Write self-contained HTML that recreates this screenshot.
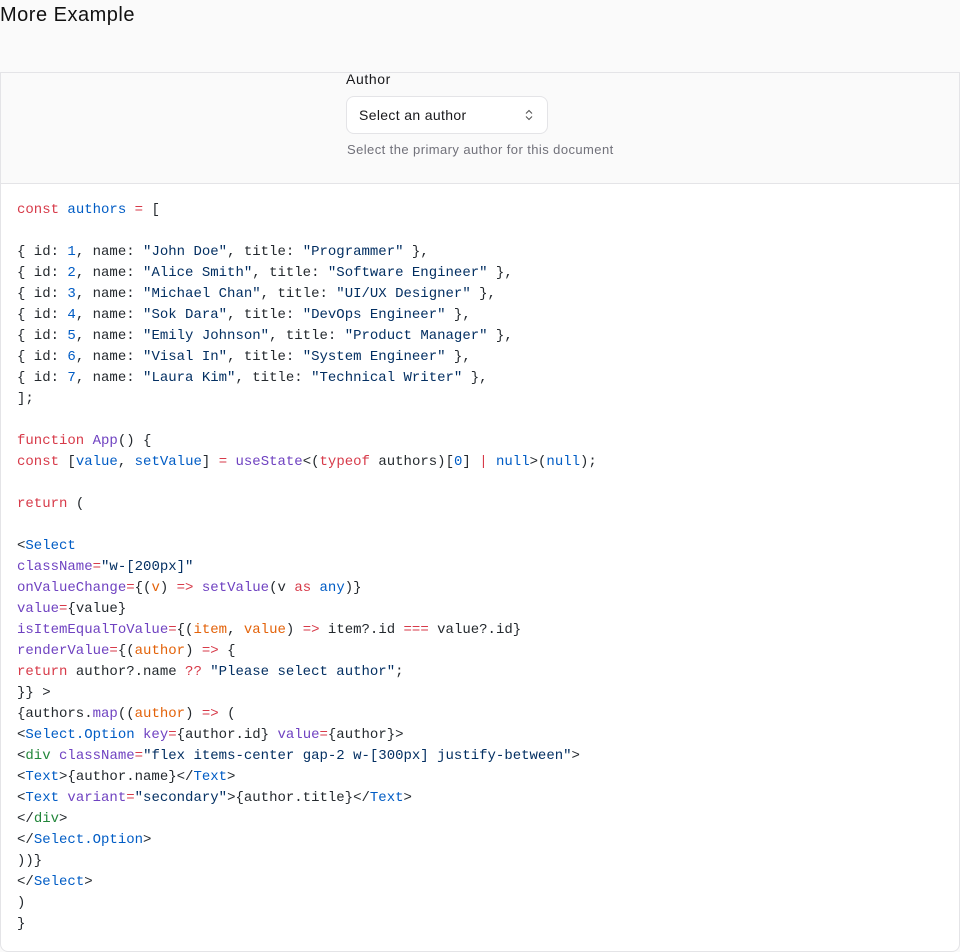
<!DOCTYPE html>
<html><head><meta charset="utf-8"><style>
*{box-sizing:border-box;margin:0;padding:0}
body{width:960px;height:952px;background:#fafafa;font-family:"Liberation Sans",sans-serif;overflow:hidden;position:relative}
h2{position:absolute;left:0;top:4px;font-size:20px;font-weight:400;color:#111;letter-spacing:0.5px}
.card{position:absolute;left:0;top:72px;width:960px;height:880px;border:1px solid #e4e4e7;border-radius:0 0 8px 8px;overflow:hidden;background:#fff}
.top{height:111px;background:#fafafa;border-bottom:1px solid #e4e4e7;position:relative}
.lbl{position:absolute;left:345px;top:-2px;font-size:14px;color:#18181b;letter-spacing:0.6px}
.sel{position:absolute;left:345px;top:23px;width:202px;height:38px;border:1px solid #e4e4e7;border-radius:8px;background:#fff;font-size:14px;color:#18181b;padding:10px 12px;letter-spacing:0.35px}
.sel svg{position:absolute;right:14px;top:12px}
.hint{position:absolute;left:346px;top:69px;font-size:13px;color:#71717a;letter-spacing:0.42px}
pre{font-family:"Liberation Mono",monospace;font-size:14px;line-height:21px;color:#24292e;padding:16px 16px}
.k{color:#d73a49}.b{color:#005cc5}.s{color:#032f62}.p{color:#6f42c1}.o{color:#e36209}.g{color:#22863a}
</style></head><body>
<h2>More Example</h2>
<div class="card">
<div class="top">
<div class="lbl">Author</div>
<div class="sel">Select an author<svg width="8" height="12" viewBox="0 0 8 12"><path d="M1 4.5L4 1.5L7 4.5M1 7.5L4 10.5L7 7.5" fill="none" stroke="#555" stroke-width="1.1"/></svg></div>
<div class="hint">Select the primary author for this document</div>
</div>
<pre><span class="k">const</span> <span class="b">authors</span> <span class="k">=</span> [

{ id: <span class="b">1</span>, name: <span class="s">"John Doe"</span>, title: <span class="s">"Programmer"</span> },
{ id: <span class="b">2</span>, name: <span class="s">"Alice Smith"</span>, title: <span class="s">"Software Engineer"</span> },
{ id: <span class="b">3</span>, name: <span class="s">"Michael Chan"</span>, title: <span class="s">"UI/UX Designer"</span> },
{ id: <span class="b">4</span>, name: <span class="s">"Sok Dara"</span>, title: <span class="s">"DevOps Engineer"</span> },
{ id: <span class="b">5</span>, name: <span class="s">"Emily Johnson"</span>, title: <span class="s">"Product Manager"</span> },
{ id: <span class="b">6</span>, name: <span class="s">"Visal In"</span>, title: <span class="s">"System Engineer"</span> },
{ id: <span class="b">7</span>, name: <span class="s">"Laura Kim"</span>, title: <span class="s">"Technical Writer"</span> },
];

<span class="k">function</span> <span class="p">App</span>() {
<span class="k">const</span> [<span class="b">value</span>, <span class="b">setValue</span>] <span class="k">=</span> <span class="p">useState</span>&lt;(<span class="k">typeof</span> authors)[<span class="b">0</span>] <span class="k">|</span> <span class="b">null</span>&gt;(<span class="b">null</span>);

<span class="k">return</span> (

&lt;<span class="b">Select</span>
<span class="p">className</span><span class="k">=</span><span class="s">"w-[200px]"</span>
<span class="p">onValueChange</span><span class="k">=</span>{(<span class="o">v</span>) <span class="k">=&gt;</span> <span class="p">setValue</span>(v <span class="k">as</span> <span class="b">any</span>)}
<span class="p">value</span><span class="k">=</span>{value}
<span class="p">isItemEqualToValue</span><span class="k">=</span>{(<span class="o">item</span>, <span class="o">value</span>) <span class="k">=&gt;</span> item?.id <span class="k">===</span> value?.id}
<span class="p">renderValue</span><span class="k">=</span>{(<span class="o">author</span>) <span class="k">=&gt;</span> {
<span class="k">return</span> author?.name <span class="k">??</span> <span class="s">"Please select author"</span>;
}} &gt;
{authors.<span class="p">map</span>((<span class="o">author</span>) <span class="k">=&gt;</span> (
&lt;<span class="b">Select.Option</span> <span class="p">key</span><span class="k">=</span>{author.id} <span class="p">value</span><span class="k">=</span>{author}&gt;
&lt;<span class="g">div</span> <span class="p">className</span><span class="k">=</span><span class="s">"flex items-center gap-2 w-[300px] justify-between"</span>&gt;
&lt;<span class="b">Text</span>&gt;{author.name}&lt;/<span class="b">Text</span>&gt;
&lt;<span class="b">Text</span> <span class="p">variant</span><span class="k">=</span><span class="s">"secondary"</span>&gt;{author.title}&lt;/<span class="b">Text</span>&gt;
&lt;/<span class="g">div</span>&gt;
&lt;/<span class="b">Select.Option</span>&gt;
))}
&lt;/<span class="b">Select</span>&gt;
)
}</pre>
</div>
</body></html>
